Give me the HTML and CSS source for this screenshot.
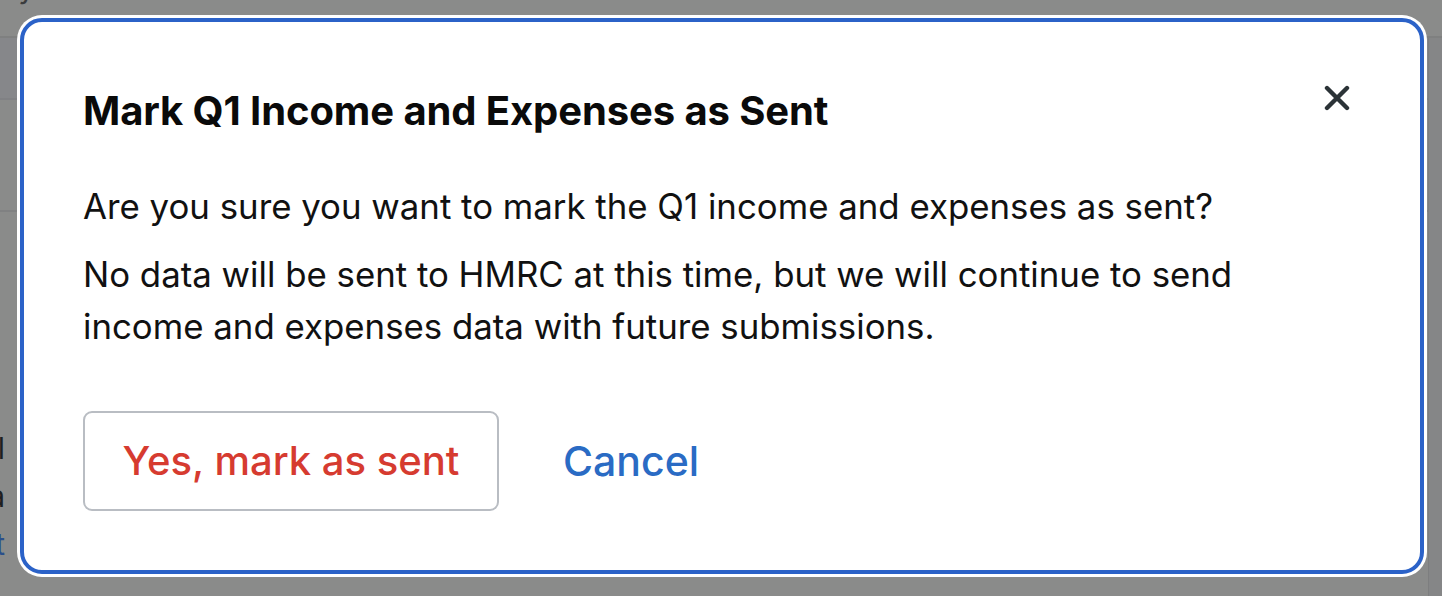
FILE: index.html
```html
<!DOCTYPE html>
<html lang="en">
<head>
<meta charset="utf-8">
<title>Mark Q1 as Sent</title>
<link rel="stylesheet" href="styles.css">
</head>
<body>
<div class="page">
  <div class="page-top"><span class="page-top-text">Summary</span></div>
  <div class="page-body">
    <div class="page-main">
      <div class="page-band"></div>
      <div class="page-row"></div>
      <div class="page-text">
        <p class="page-line">Total</p>
        <p class="page-line">Data</p>
        <p class="page-link">Edit</p>
      </div>
    </div>
    <div class="page-side"></div>
  </div>
</div>
<div class="overlay">
  <div class="modal" role="dialog" aria-labelledby="modal-title">
    <div class="modal-head">
      <h2 id="modal-title" class="modal-title">Mark Q1 Income and Expenses as Sent</h2>
      <button class="close" aria-label="Close">
        <svg width="26" height="26" viewBox="0 0 26 26"><path d="M3 3L23 23M23 3L3 23" stroke="#2b3337" stroke-width="4.4" stroke-linecap="round"/></svg>
      </button>
    </div>
    <p class="modal-text first">Are you sure you want to mark the Q1 income and expenses as sent?</p>
    <p class="modal-text">No data will be sent to HMRC at this time, but we will continue to send<br>income and expenses data with future submissions.</p>
    <div class="actions">
      <button class="btn-confirm">Yes, mark as sent</button>
      <button class="btn-cancel">Cancel</button>
    </div>
  </div>
</div>
</body>
</html>
```
FILE: styles.css
```css
* { box-sizing: border-box; }
html, body { margin: 0; padding: 0; }
body {
  width: 1442px;
  height: 596px;
  overflow: hidden;
  background: #8a8b8a;
  font-family: "Inter", "Lato", sans-serif;
  position: relative;
}
.page { display: flex; flex-direction: column; height: 596px; }
.page-top { height: 38px; border-bottom: 2px solid #7f8080; padding-left: 0; overflow: hidden; }
.page-top-text {
  display: block;
  margin-left: -100px;
  margin-top: -28px;
  font-size: 30px;
  line-height: 30px;
  color: #3a3b3c;
}
.page-body { flex: 1; display: flex; }
.page-main { flex: 1; display: flex; flex-direction: column; }
.page-side { width: 14px; background: #858687; border-left: 1px solid #7d7e7f; }
.page-band { height: 62px; background: #86878a; border-bottom: 2px solid #808184; }
.page-row { height: 112px; border-bottom: 2px solid #808182; }
.page-text { width: 100px; margin-left: -95px; padding-top: 212px; text-align: right; }
.page-line { margin: 0; font-size: 30px; line-height: 48px; color: #1e1f20; }
.page-link { margin: 0; font-size: 30px; line-height: 48px; color: #2a4f8a; }

.overlay {
  position: absolute;
  inset: 0;
}
.modal {
  position: absolute;
  left: 20px;
  top: 18px;
  width: 1404px;
  height: 556px;
  background: #fff;
  border: 4px solid #2b62c8;
  border-radius: 22px;
  box-shadow: 0 0 0 3px #fff;
  padding: 64.5px 60px 0 59px;
}
.modal-head { display: flex; justify-content: space-between; align-items: flex-start; }
.modal-title {
  margin: 0;
  font-size: 40px;
  font-weight: 700;
  line-height: 48px;
  color: #0a0a0a;
  letter-spacing: -0.1px;
}
.close {
  border: 0; background: none; padding: 0; margin: -2px 10px 0 0;
  width: 26px; height: 26px; display: flex; cursor: pointer;
}
.modal-text {
  margin: 0;
  font-size: 34.8px;
  line-height: 51.5px;
  color: #111;
}
.modal-text.first { margin-top: 46.4px; margin-bottom: 17px; }
.actions { display: flex; align-items: center; gap: 64px; margin-top: 58.6px; }
.btn-confirm {
  width: 416px;
  height: 100px;
  padding: 0;
  border: 2px solid #b9bdc3;
  border-radius: 9px;
  background: #fff;
  color: #d63b30;
  font-family: inherit;
  font-size: 40px;
  font-weight: 500;
}
.btn-cancel {
  border: 0; background: none; padding: 0;
  color: #2a6bc4;
  font-family: inherit;
  font-size: 41px;
  font-weight: 500;
}
```
